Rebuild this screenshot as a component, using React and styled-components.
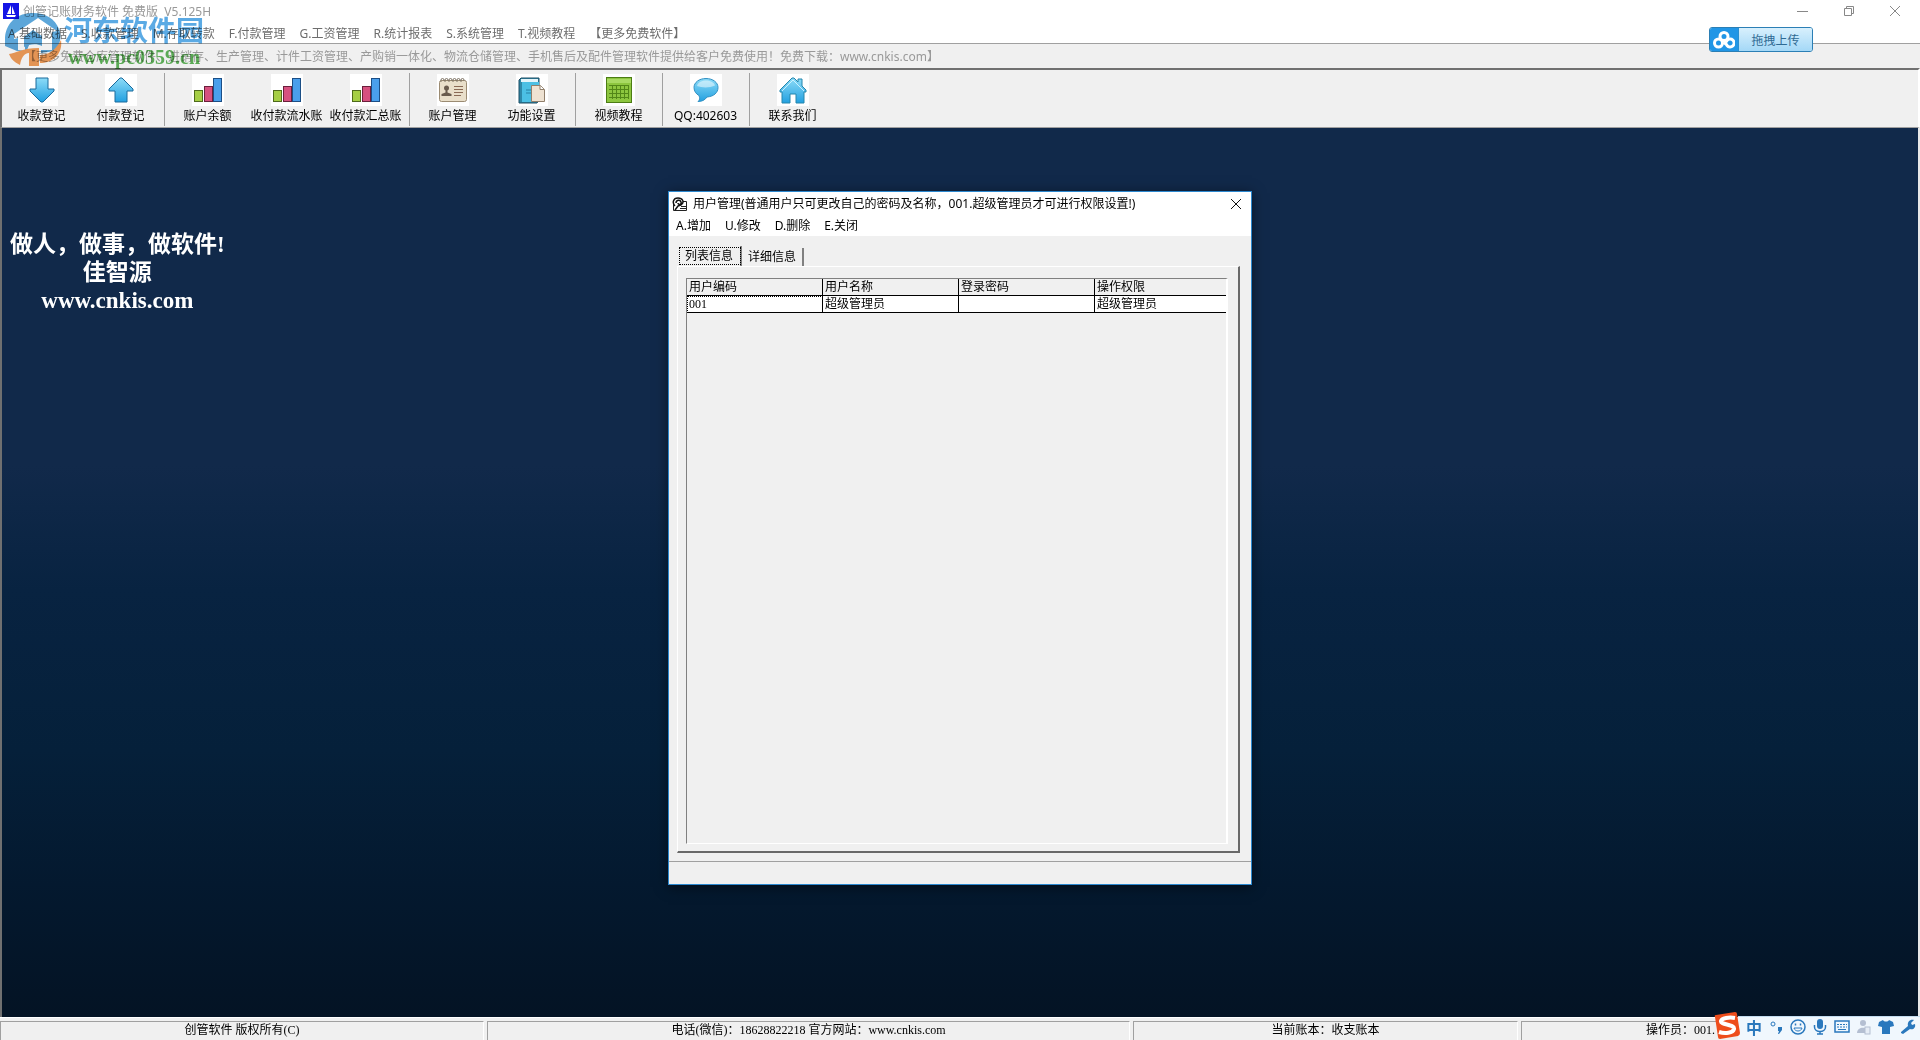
import styled, { createGlobalStyle } from "styled-components";

const MENU = [
  "A.基础数据",
  "S.收款管理",
  "M.存取转款",
  "F.付款管理",
  "G.工资管理",
  "R.统计报表",
  "S.系统管理",
  "T.视频教程",
  "【更多免费软件】",
];

const DownArrow = () => (
  <svg width="26" height="26" viewBox="0 0 26 26">
    <path d="M7 1h12v11h6v2L14 25h-2L1 14v-2h6z" fill="url(#sky)" stroke="#1a6a9c" />
  </svg>
);

const UpArrow = () => (
  <svg width="26" height="26" viewBox="0 0 26 26">
    <path d="M7 25h12V14h6v-2L14 1h-2L1 12v2h6z" fill="url(#sky)" stroke="#1a6a9c" />
  </svg>
);

const Bars = () => (
  <svg width="28" height="26" viewBox="0 0 28 26">
    <rect x="0.5" y="13.5" width="8" height="11" fill="#a6cf45" stroke="#4f6b1c" />
    <rect x="10.5" y="9.5" width="8" height="15" fill="#d6517f" stroke="#6b1f3c" />
    <rect x="19.5" y="1.5" width="8" height="23" fill="#4a9fec" stroke="#1c4f86" />
  </svg>
);

const Card = () => (
  <svg width="28" height="26" viewBox="0 0 28 26">
    <rect x="0.5" y="3.5" width="27" height="21" rx="2" fill="#e9dfca" stroke="#9b8b72" />
    <path
      d="M2 5V3a1.500 1.500 0 0 1 3 0v1M6 5V3a1.500 1.500 0 0 1 3 0v1M10 5V3a1.500 1.500 0 0 1 3 0v1M14 5V3a1.500 1.500 0 0 1 3 0v1M18 5V3a1.500 1.500 0 0 1 3 0v1M22 5V3a1.500 1.500 0 0 1 3 0v1"
      fill="none"
      stroke="#7d7263"
    />
    <circle cx="7.500" cy="11" r="2.500" fill="#6a5c4e" />
    <path d="M2.500 19v-2l4-1.500v-3h2v3l4 1.500v2z" fill="#6a5c4e" />
    <path d="M15 9.500h9M15 12.500h9M15 15.500h9M15 18.500h7" stroke="#8a6a55" />
  </svg>
);

const Book = () => (
  <svg width="28" height="27" viewBox="0 0 28 27">
    <path d="M1 3l2-2h18v22l-2 3H1z" fill="#2d88a8" stroke="#1f4c62" />
    <path d="M3 2h17v3H3z" fill="#e4f5fa" />
    <path d="M4 5h17v20H4z" fill="#4bc0e4" />
    <path d="M8 13h8M8 16h6" stroke="#2882a6" />
    <path d="M13.500 8.500h9l4 4v12h-13z" fill="#eee2d2" stroke="#907f6b" />
    <path d="M22 8.500v4h4" fill="#fff" stroke="#907f6b" />
  </svg>
);

const Sheet = () => (
  <svg width="26" height="26" viewBox="0 0 26 26">
    <rect x="0.5" y="0.5" width="25" height="25" fill="#8dc63f" stroke="#4c7d14" />
    <path d="M1 3h24M1 5h24" stroke="#a9da63" strokeWidth="2" />
    <path
      d="M3 8.500h20M3 12.500h20M3 16.500h20M3 20.500h20M6.500 8v14M10.500 8v14M14.500 8v14M18.500 8v14M22.500 8v14"
      stroke="#538718"
    />
  </svg>
);

const Bubble = () => (
  <svg width="26" height="26" viewBox="0 0 26 26">
    <path
      d="M13 1.500c7 0 12 4 12 9s-4 9-11 9.500c-2 3-5 4.500-9 4.500 2-1.500 2-3.500 1-6-3-1.500-5-4.500-5-8 0-5 5-9 12-9z"
      fill="url(#sky)"
      stroke="#3392c4"
    />
    <path d="M4 9c1-4 5-5.500 9-5.500s8 1.500 9 5c-5 2.500-13 2.500-18 .5z" fill="#fff" opacity="0.5" />
  </svg>
);

const House = () => (
  <svg width="28" height="27" viewBox="0 0 28 27">
    <path
      d="M3 26V15H1v-2L13 1h2l4 4V2h4v7l4 4v2h-2v11h-8v-9h-6v9z"
      fill="url(#sky)"
      stroke="#2486ad"
    />
    <path d="M3 14L14 3l11 11" fill="none" stroke="#c9f1ff" />
  </svg>
);

const TOOLS = [
  [
    { label: "收款登记", Icon: DownArrow },
    { label: "付款登记", Icon: UpArrow },
  ],
  [
    { label: "账户余额", Icon: Bars },
    { label: "收付款流水账", Icon: Bars },
    { label: "收付款汇总账", Icon: Bars },
  ],
  [
    { label: "账户管理", Icon: Card },
    { label: "功能设置", Icon: Book },
  ],
  [{ label: "视频教程", Icon: Sheet }],
  [{ label: "QQ:402603", Icon: Bubble }],
  [{ label: "联系我们", Icon: House }],
];

const COLUMNS = ["用户编码", "用户名称", "登录密码", "操作权限"];
const USERS = [["001", "超级管理员", "", "超级管理员"]];

const App = () => (
  <Window>
    <GlobalStyle />
    <Defs />
    <TitleBar>
      <AppIcon />
      <Title>创管记账财务软件 免费版&nbsp; V5.125H</Title>
      <WindowButton aria-label="最小化">
        <svg width="12" height="12" viewBox="0 0 12 12">
          <path d="M0 6.500h11" />
        </svg>
      </WindowButton>
      <WindowButton aria-label="还原">
        <svg width="12" height="12" viewBox="0 0 12 12">
          <path d="M1.500 3.500h7v7h-7zM3.500 3.500v-2h7v7h-2" />
        </svg>
      </WindowButton>
      <WindowButton aria-label="关闭">
        <svg width="12" height="12" viewBox="0 0 12 12">
          <path d="M1 1l10 10M11 1L1 11" />
        </svg>
      </WindowButton>
    </TitleBar>
    <MenuBar>
      {MENU.map((item) => (
        <MenuItem key={item} muted>
          {item}
        </MenuItem>
      ))}
    </MenuBar>
    <Notice>
      【更多免费仓库管理软件、进销存、生产管理、计件工资管理、产购销一体化、物流仓储管理、手机售后及配件管理软件提供给客户免费使用！免费下载：www.cnkis.com】
    </Notice>
    <ToolBar>
      {TOOLS.map((group) => (
        <ToolGroup key={group[0].label}>
          {group.map(({ label, Icon }) => (
            <ToolButton key={label}>
              <IconBox>
                <Icon />
              </IconBox>
              {label}
            </ToolButton>
          ))}
        </ToolGroup>
      ))}
    </ToolBar>
    <Workspace>
      <Slogan>
        <p>做人，做事，做软件!</p>
        <p>佳智源</p>
        <p>www.cnkis.com</p>
      </Slogan>
      <UserDialog />
    </Workspace>
    <StatusBar>
      <StatusPanel>创管软件 版权所有(C)</StatusPanel>
      <StatusPanel>电话(微信)：18628822218 官方网站：www.cnkis.com</StatusPanel>
      <StatusPanel>当前账本：收支账本</StatusPanel>
      <StatusPanel operator>操作员：001.</StatusPanel>
    </StatusBar>
    <Watermark />
    <UploadButton>
      <UploadIcon>
        <svg width="22" height="18" viewBox="0 0 22 18">
          <g fill="none" stroke="#fff" strokeWidth="3">
            <circle cx="11" cy="5.500" r="4" />
            <circle cx="5.500" cy="12" r="4" />
            <path d="M11 9.500l3 5a4 4 0 1 0 0-5l-3 4" />
          </g>
        </svg>
      </UploadIcon>
      <UploadLabel>拖拽上传</UploadLabel>
    </UploadButton>
    <ImeBar />
  </Window>
);

const Defs = () => (
  <HiddenSvg aria-hidden="true">
    <linearGradient id="sky" x1="0" y1="0" x2="0" y2="1">
      <stop offset="0" stopColor="#8ddcf8" />
      <stop offset="1" stopColor="#22a0e0" />
    </linearGradient>
  </HiddenSvg>
);

const AppIcon = () => (
  <svg width="16" height="16" viewBox="0 0 16 16">
    <rect width="16" height="16" fill="#1414e6" />
    <path d="M8 2v9H4zM9 3l3 8H9zM3 12h10l-1 2H4z" fill="#fff" />
  </svg>
);

const UserDialog = () => (
  <Dialog role="dialog" aria-label="用户管理">
    <DialogTitle>
      <svg width="16" height="15" viewBox="0 0 16 15">
        <path d="M1.500 6v7.500h13v-9H11" fill="#fff" stroke="#222" />
        <path
          d="M3 9C0 6 1 1 6 1s6 4 4 6c-1 2-3 1-4 2l-3 4M4 6c0-3 4-4 5-1s-3 3-3 1"
          fill="none"
          stroke="#111"
          strokeWidth="1.500"
        />
        <path d="M9 9.500h5M8 11.500h6" stroke="#222" />
      </svg>
      <span>用户管理(普通用户只可更改自己的密码及名称，001.超级管理员才可进行权限设置!)</span>
      <DialogClose aria-label="关闭">
        <svg width="12" height="12" viewBox="0 0 12 12">
          <path d="M1 1l10 10M11 1L1 11" stroke="#111" fill="none" />
        </svg>
      </DialogClose>
    </DialogTitle>
    <DialogMenu>
      {["A.增加", "U.修改", "D.删除", "E.关闭"].map((item) => (
        <MenuItem key={item}>{item}</MenuItem>
      ))}
    </DialogMenu>
    <DialogBody>
      <Tabs role="tablist">
        <Tab role="tab" aria-selected="true" active>
          列表信息
        </Tab>
        <Tab role="tab" aria-selected="false">
          详细信息
        </Tab>
      </Tabs>
      <TabPanel role="tabpanel">
        <GridBox>
          <Table>
            <thead>
              <tr>
                {COLUMNS.map((name) => (
                  <th key={name}>{name}</th>
                ))}
              </tr>
            </thead>
            <tbody>
              {USERS.map((row) => (
                <tr key={row[0]}>
                  {row.map((cell, i) => (
                    <Cell key={i} focused={i === 0}>
                      {cell}
                    </Cell>
                  ))}
                </tr>
              ))}
            </tbody>
          </Table>
        </GridBox>
      </TabPanel>
    </DialogBody>
    <DialogFooter />
  </Dialog>
);

const Watermark = () => (
  <WatermarkBox>
    <svg width="57" height="54" viewBox="0 0 57 54">
      <path d="M0 33C-2 12 10 0 28 0c13 0 22 6 26 16 3 8 1 17-4 22l-14 2V27l-9-2-5 12-10 1z" fill="#3f97d3" />
      <path d="M9 21L33 5l19 13-5 1v18H36V26l-9-4-7 6v9h-7V25l-4 1z" fill="#fff" />
      <path d="M19 24l9-7 9 6v10c-6-3-12-2-18 1z" fill="#3f97d3" />
      <path d="M56 27c2 14-8 23-21 23v-8c8 0 16-5 21-15z" fill="#f08c3c" />
      <path d="M4 41c7-1 13-6 30-6v18H24V40c-5 0-8 5-9 12C9 49 6 46 4 41z" fill="#f08c3c" />
    </svg>
    <WatermarkText>
      <WatermarkName>河东软件园</WatermarkName>
      <WatermarkSite>www.pc0359.cn</WatermarkSite>
    </WatermarkText>
  </WatermarkBox>
);

const ImeBar = () => (
  <Ime>
    <ImeLogo width="28" height="28" viewBox="0 0 28 28">
      <path d="M2 5Q1 3 3 3L22 0q2 0 2 2l3 19q0 2-2 3L7 27q-2 0-2-2z" fill="#ee4d1b" />
      <path
        d="M22 6C16 5 9 6 8 9c-1 4 14 3 13 8-1 4-9 5-15 3"
        fill="none"
        stroke="#fff"
        strokeWidth="4"
      />
    </ImeLogo>
    <ImeStrip>
      <ImeButton>中</ImeButton>
      <ImeButton aria-label="标点">
        <svg width="16" height="16" viewBox="0 0 16 16">
          <circle cx="5" cy="5" r="2" fill="none" stroke="#2a78bd" />
          <path d="M10 8h4v3l-3 4h-1l1-3h-1z" fill="#2a78bd" />
        </svg>
      </ImeButton>
      <ImeButton aria-label="表情">
        <svg width="16" height="16" viewBox="0 0 16 16" fill="none" stroke="#2a78bd">
          <circle cx="8" cy="8" r="7" strokeWidth="1.500" />
          <path d="M4 9c1 4 7 4 8 0z" />
          <path d="M5.500 4.500v2M10.500 4.500v2" strokeWidth="1.500" />
        </svg>
      </ImeButton>
      <ImeButton aria-label="语音">
        <svg width="14" height="16" viewBox="0 0 14 16" fill="none" stroke="#2a78bd">
          <rect x="4" y="0" width="6" height="10" rx="3" fill="#2a78bd" stroke="none" />
          <path d="M1.500 6v2c0 6 11 6 11 0V6M7 12v3M4 15h6" strokeWidth="1.500" />
        </svg>
      </ImeButton>
      <ImeButton aria-label="键盘">
        <svg width="16" height="14" viewBox="0 0 16 14">
          <rect x="1" y="1" width="14" height="11" fill="none" stroke="#2a78bd" strokeWidth="1.500" />
          <path d="M3 4.500h10M3 7h10" stroke="#2a78bd" strokeDasharray="2 1" />
          <path d="M4 9.500h8" stroke="#2a78bd" />
        </svg>
      </ImeButton>
      <ImeButton aria-label="用户">
        <svg width="14" height="16" viewBox="0 0 14 16">
          <circle cx="6" cy="4" r="3" fill="#b4bfd2" />
          <path d="M0 14c0-7 12-7 12 0z" fill="#b4bfd2" />
          <rect x="8" y="8" width="5" height="7" fill="#e6edf6" stroke="#b4bfd2" />
        </svg>
      </ImeButton>
      <ImeButton aria-label="皮肤">
        <svg width="16" height="16" viewBox="0 0 16 16">
          <path d="M5 1c1 2 5 2 6 0l4 2 1 4-4 1v7H4V8L0 7l1-4z" fill="#2a78bd" />
        </svg>
      </ImeButton>
      <ImeButton aria-label="工具">
        <svg width="16" height="16" viewBox="0 0 16 16">
          <path d="M1 13l7-6c-1-4 2-7 6-6l-3 3 1 2 3-1c1 4-2 6-5 5l-7 5-2-1z" fill="#2a78bd" />
        </svg>
      </ImeButton>
    </ImeStrip>
  </Ime>
);

const GlobalStyle = createGlobalStyle`
  * {
    box-sizing: border-box;
  }
  body {
    margin: 0;
    background: #f0f0f0;
    color: #000;
    font-family: "Noto Sans", "Noto Sans CJK SC", sans-serif;
    font-size: 12px;
    line-height: 16px;
  }
  button {
    border: 0;
    padding: 0;
    background: none;
    color: inherit;
    font: inherit;
  }
  svg {
    display: block;
    flex: none;
  }
  p {
    margin: 0;
  }
`;
const HiddenSvg = styled.svg`
  position: absolute;
  width: 0;
  height: 0;
`;
const Window = styled.div`
  position: relative;
  display: flex;
  flex-direction: column;
  height: 100vh;
  overflow: hidden;
`;
const TitleBar = styled.header`
  display: flex;
  align-items: center;
  height: 22px;
  padding: 0 2px 0 3px;
  background: #fff;
`;
const Title = styled.h1`
  flex: 1;
  margin: 0 0 0 4px;
  padding-top: 2px;
  color: #999;
  font-size: 12px;
  font-weight: 400;
`;
const WindowButton = styled.button`
  display: flex;
  justify-content: center;
  align-items: center;
  width: 46px;
  height: 20px;
  svg {
    fill: none;
    stroke: #888;
  }
`;
const MenuBar = styled.nav`
  display: flex;
  align-items: center;
  gap: 14px;
  height: 22px;
  padding: 2px 8px 0;
  border-bottom: 1px solid #a0a0a0;
  background: #fff;
`;
const MenuItem = styled.button.withConfig({
  shouldForwardProp: (prop) => prop !== "muted",
})`
  white-space: nowrap;
  color: ${(props) => (props.muted ? "#6d6d6d" : "#000")};
`;
const Notice = styled.div`
  height: 24px;
  padding: 5px 24px 0;
  overflow: hidden;
  white-space: nowrap;
  color: #999;
`;
const ToolBar = styled.div`
  display: flex;
  height: 60px;
  padding: 3px 0 1px;
  border: 2px solid #707070;
  border-right-color: #fff;
  border-bottom: 1px solid #a0a0a0;
`;
const ToolGroup = styled.div`
  display: flex;
  & + & {
    padding-left: 3px;
    margin-left: 4px;
    border-left: 1px solid #a0a0a0;
  }
`;
const ToolButton = styled.button`
  display: flex;
  flex-direction: column;
  align-items: center;
  width: 79px;
  white-space: nowrap;
`;
const IconBox = styled.span`
  display: flex;
  justify-content: center;
  align-items: center;
  width: 32px;
  height: 32px;
  margin: 1px 0 2px;
  background: #fff;
`;
const Workspace = styled.main`
  position: relative;
  display: flex;
  flex: 1;
  flex-direction: column;
  align-items: center;
  min-height: 0;
  padding: 63px 16px 0;
  border-left: 2px solid #707070;
  border-right: 2px solid #e8e8e8;
  background: linear-gradient(#11294a, #11294a 38%, #082341 52%, #05203a 70%, #04192f 85%, #041324);
`;
const Slogan = styled.div`
  position: absolute;
  top: 103px;
  left: 8px;
  color: #fff;
  font-family: "Liberation Serif", "Noto Sans CJK SC", serif;
  font-size: 23px;
  font-weight: 700;
  line-height: 28px;
  text-align: center;
`;
const Dialog = styled.section`
  display: flex;
  flex-direction: column;
  width: 584px;
  height: 694px;
  border: 1px solid #2b88cf;
  background: #f0f0f0;
  box-shadow: 0 2px 12px rgba(0, 0, 0, 0.5);
`;
const DialogTitle = styled.div`
  display: flex;
  align-items: center;
  gap: 5px;
  height: 24px;
  padding-left: 3px;
  background: #fff;
  white-space: nowrap;
`;
const DialogClose = styled.button`
  margin: 0 9px 0 auto;
`;
const DialogMenu = styled.div`
  display: flex;
  gap: 14px;
  height: 20px;
  padding-left: 7px;
  background: #fff;
`;
const DialogBody = styled.div`
  display: flex;
  flex: 1;
  flex-direction: column;
  padding: 10px 11px 8px 8px;
`;
const Tabs = styled.div`
  display: flex;
  align-items: flex-end;
  height: 20px;
  padding-left: 1px;
`;
const Tab = styled.button.withConfig({
  shouldForwardProp: (prop) => prop !== "active",
})`
  height: 18px;
  padding: 0 6px;
  border-right: 2px solid #808080;
  ${(props) =>
    props.active &&
    `
  height: 20px;
  padding: 0 7px;
  outline: 1px dotted #000;
  outline-offset: -2px;
  `}
`;
const TabPanel = styled.div`
  display: flex;
  flex: 1;
  padding: 11px 10px 7px 8px;
  border: 1px solid #fff;
  border-right: 2px solid #696969;
  border-bottom: 2px solid #696969;
`;
const GridBox = styled.div`
  flex: 1;
  border: 1px solid #808080;
  border-right: 2px solid #fff;
  border-bottom: 1px solid #fff;
`;
const Table = styled.table`
  width: 100%;
  table-layout: fixed;
  border-collapse: separate;
  border-spacing: 0;
  th,
  td {
    height: 17px;
    padding: 0 2px;
    border-right: 1px solid #000;
    border-bottom: 1px solid #000;
    text-align: left;
    font-weight: 400;
    line-height: 16px;
  }
  th {
    width: 136px;
  }
  th:last-child,
  td:last-child {
    width: auto;
    border-right: 0;
  }
`;
const Cell = styled.td.withConfig({
  shouldForwardProp: (prop) => prop !== "focused",
})`
  background: #fff;
  font-family: "Liberation Serif", "Noto Sans CJK SC", serif;
  ${(props) =>
    props.focused &&
    `
  outline: 1px dotted #000;
  outline-offset: -1px;
  `}
`;
const DialogFooter = styled.footer`
  height: 23px;
  border-top: 1px solid #a0a0a0;
`;
const StatusBar = styled.footer`
  display: grid;
  grid-template-columns: 484fr 643fr 385fr 399fr;
  gap: 3px;
  height: 23px;
  padding-top: 3px;
  border-top: 1px solid #fff;
  font-family: "Liberation Serif", "Noto Sans CJK SC", serif;
`;
const StatusPanel = styled.div.withConfig({
  shouldForwardProp: (prop) => prop !== "operator",
})`
  border-top: 1px solid #a0a0a0;
  border-left: 1px solid #a0a0a0;
  border-right: 1px solid #fff;
  text-align: center;
  white-space: nowrap;
  ${(props) =>
    props.operator &&
    `
  padding-right: 204px;
  text-align: right;
  `}
`;
const WatermarkBox = styled.div`
  position: absolute;
  top: 13px;
  left: 5px;
  display: flex;
  gap: 2px;
  opacity: 0.85;
  mix-blend-mode: multiply;
  pointer-events: none;
`;
const WatermarkText = styled.div`
  display: flex;
  flex-direction: column;
  align-items: center;
`;
const WatermarkName = styled.span`
  color: #3e9be0;
  font-family: "Noto Sans CJK SC", sans-serif;
  font-size: 28px;
  font-weight: 700;
  line-height: 33px;
`;
const WatermarkSite = styled.span`
  color: #45a83e;
  font-family: "Liberation Serif", serif;
  font-size: 20px;
  font-weight: 700;
  line-height: 22px;
`;
const UploadButton = styled.button`
  position: absolute;
  top: 27px;
  right: 107px;
  display: flex;
  width: 104px;
  height: 25px;
  overflow: hidden;
  border: 1px solid #2b7fb5;
  border-radius: 3px;
`;
const UploadIcon = styled.span`
  display: flex;
  justify-content: center;
  align-items: center;
  width: 29px;
  height: 23px;
  border-right: 1px solid #2b8fd0;
  background: #2196e6;
`;
const UploadLabel = styled.span`
  flex: 1;
  height: 23px;
  background: linear-gradient(#d8f0fd, #a4d8f7);
  color: #2f6a93;
  line-height: 26px;
`;
const Ime = styled.div`
  position: absolute;
  right: 0;
  bottom: 0;
  display: flex;
  align-items: flex-end;
`;
const ImeLogo = styled.svg`
  margin-right: -3px;
  z-index: 1;
`;
const ImeStrip = styled.div`
  display: flex;
  align-items: center;
  height: 24px;
  padding: 0 1px 3px 5px;
  border-top: 1px solid #c4dcef;
  background: #f0f7fd;
`;
const ImeButton = styled.button`
  display: flex;
  justify-content: center;
  align-items: center;
  width: 22px;
  color: #2a78bd;
  font-family: "Noto Sans CJK SC", sans-serif;
  font-size: 16px;
  font-weight: 700;
`;

export default App;
